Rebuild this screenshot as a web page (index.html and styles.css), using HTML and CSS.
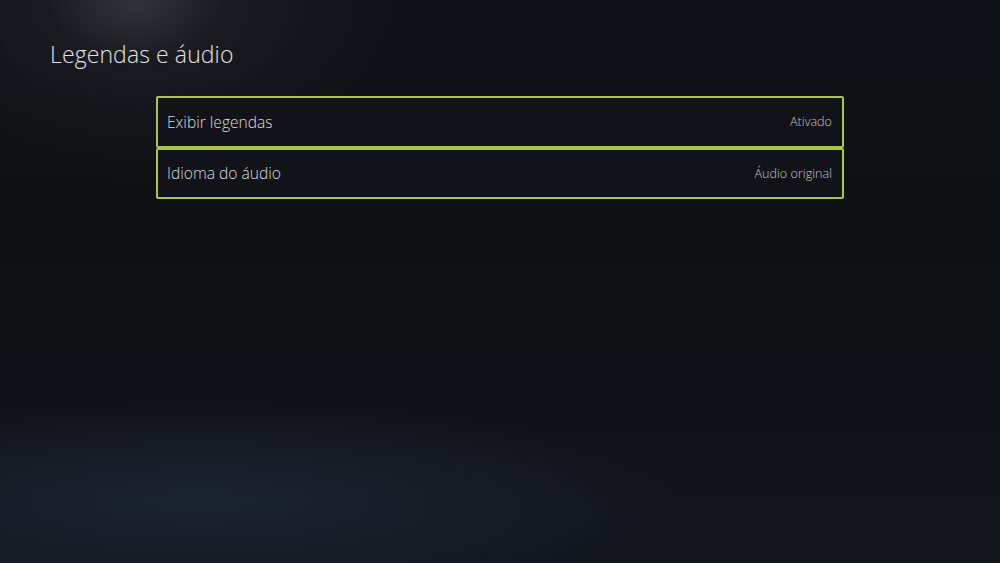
FILE: index.html
```html
<!DOCTYPE html>
<html lang="pt-BR">

<head>
    <meta charset="UTF-8">
    <meta name="viewport" content="width=device-width,initial-scale=1.0">
    <title>Legendas e áudio</title>
    <link rel="stylesheet" href="styles.css">
</head>

<body>
    <div class="screen">
        <h1 class="title">Legendas e áudio</h1>
        <!-- lista de opções -->
        <ul class="options">
            <li class="option">
                <span class="option_label">Exibir legendas</span>
                <span class="option_value">Ativado</span>
            </li>
            <li class="option">
                <span class="option_label">Idioma do áudio</span>
                <span class="option_value">Áudio original</span>
            </li>
        </ul>
    </div>
</body>

</html>
```

FILE: styles.css
```css
* {
    padding: 0;
    margin: 0;
    box-sizing: border-box;
}

html,
body {
    width: 100%;
    height: 100%;
}

body {
    background-color: #0e0f13;
    font-family: "Open Sans", "Noto Sans", sans-serif;
    overflow: hidden;
}

.screen {
    width: 100%;
    height: 100%;
    padding: 38px 0 0 50px;
    background:
        radial-gradient(ellipse 90px 60px at 135px 0, rgba(70, 72, 78, 0.5), rgba(40, 42, 48, 0) 100%),
        radial-gradient(ellipse 260px 170px at 140px 10px, rgba(45, 46, 52, 0.45), rgba(30, 32, 38, 0) 100%),
        radial-gradient(ellipse 480px 100px at 200px 500px, rgba(30, 40, 56, 0.8), rgba(20, 26, 36, 0) 100%),
        linear-gradient(180deg, #111217 0%, #0f1014 40%, #111217 75%, #12161d 100%);
}

.title {
    font-size: 23px;
    font-weight: 300;
    color: #e2e2e4;
    letter-spacing: 0.1px;
}

.options {
    list-style: none;
    width: 688px;
    margin: 26px 0 0 106px;
}

.option {
    display: flex;
    justify-content: space-between;
    align-items: center;
    height: 52px;
    padding: 0 10px 1px 9px;
    border: 2px solid #aac83a;
    border-radius: 2px;
    background-color: #121318;
}

.option + .option {
    height: 51px;
}

.option_label {
    font-size: 15.6px;
    font-weight: 300;
    color: #dcdcde;
}

.option_value {
    font-size: 12.6px;
    font-weight: 300;
    color: #c4c4c7;
}
```
